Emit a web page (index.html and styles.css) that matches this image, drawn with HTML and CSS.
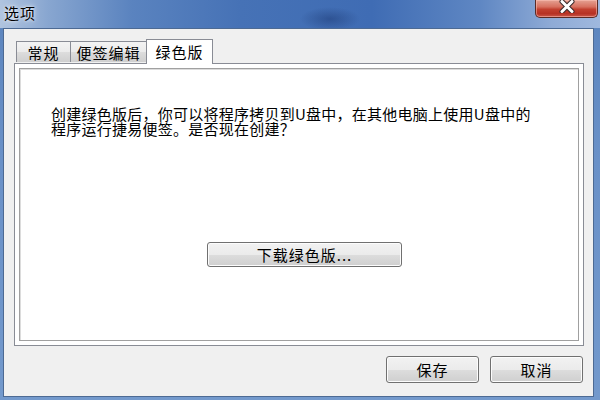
FILE: index.html
```html
<!DOCTYPE html>
<html lang="zh-CN">
<head>
<meta charset="utf-8">
<title>选项</title>
<link rel="stylesheet" href="styles.css">
</head>
<body>
<div class="window">
  <div class="titlebar">
    <span class="title">选项</span>
    <div class="close">
      <svg width="20" height="13" viewBox="0 0 20 13">
        <path d="M5 1.5 L15 11.5 M15 1.5 L5 11.5" stroke="#3a2a2a" stroke-width="5" stroke-linecap="round"/>
        <path d="M5 1.5 L15 11.5 M15 1.5 L5 11.5" stroke="#ffffff" stroke-width="3" stroke-linecap="round"/>
      </svg>
    </div>
  </div>
  <div class="client">
    <div class="tabs">
      <div class="tab t1">常规</div>
      <div class="tab t2">便签编辑</div>
      <div class="tab active">绿色版</div>
    </div>
    <div class="panel">
      <div class="inner">
        <p class="msg">创建绿色版后，你可以将程序拷贝到U盘中，在其他电脑上使用U盘中的<br>程序运行捷易便签。是否现在创建？</p>
        <div class="center-row">
          <button class="btn wide">下载绿色版...</button>
        </div>
      </div>
    </div>
    <div class="actions">
      <button class="btn">保存</button>
      <button class="btn">取消</button>
    </div>
  </div>
</div>
</body>
</html>
```
FILE: styles.css
```css
* { box-sizing: border-box; }
html, body { margin: 0; padding: 0; }
body {
  width: 600px;
  height: 400px;
  overflow: hidden;
  font-family: "Noto Sans CJK SC", "Liberation Sans", sans-serif;
  font-size: 15px;
  color: #000;
}
.window {
  width: 600px;
  height: 400px;
  display: flex;
  flex-direction: column;
  background: linear-gradient(to bottom, #5b84bd 0%, #6a91c8 40%, #7399cc 100%);
}
.titlebar {
  height: 28px;
  flex: none;
  display: flex;
  align-items: flex-start;
  background:
    radial-gradient(ellipse 30px 12px at 330px 19px, rgba(30,60,120,0.55), rgba(30,60,120,0) 100%),
    linear-gradient(to right, #b0c4df 0%, #88a6d0 8%, #5a83bf 22%, #4672b6 40%, #3f6cb4 62%, #5f87c3 80%, #8fabd6 92%, #9fb8de 100%);
}
.title {
  margin: 3px 0 0 4px;
  font-size: 15px;
  line-height: 20px;
  letter-spacing: 1px;
  text-shadow: 0 0 6px rgba(255,255,255,0.8), 0 0 3px rgba(255,255,255,0.8);
}
.close {
  margin-left: auto;
  margin-right: 2px;
  width: 63px;
  height: 18px;
  border: 1px solid #5a2b26;
  border-top: none;
  border-radius: 0 0 5px 5px;
  background: linear-gradient(to bottom, #e5a293 0%, #d7705f 40%, #c2402f 55%, #b73224 80%, #c9584a 100%);
  box-shadow: inset 0 0 0 1px rgba(255,200,190,0.5);
  display: flex;
  align-items: center;
  justify-content: center;
  padding-bottom: 4px;
}
.client {
  flex: 1;
  margin: 0 6px 3px 3px;
  border: 1px solid #4d6a93;
  background: #f0f0f0;
  display: flex;
  flex-direction: column;
  padding: 10px 9px 0 10px;
}
.tabs {
  height: 24px;
  flex: none;
  display: flex;
  align-items: flex-end;
  padding-left: 2px;
  position: relative;
  z-index: 1;
}
.tab {
  height: 21px;
  margin-bottom: 1px;
  padding: 1px 0 0;
  border: 1px solid #898c95;
  border-bottom: none;
  margin-right: -1px;
  background: linear-gradient(to bottom, #f3f3f3 0%, #ebebeb 50%, #dddddd 51%, #cfcfcf 100%);
  font-size: 15px;
  line-height: 19px;
  letter-spacing: 1px;
  white-space: nowrap;
  text-align: center;
}
.tab.t1 { width: 55px; }
.tab.t2 { width: 77px; }
.tab.active {
  height: 25px;
  margin-bottom: -1px;
  width: 67px;
  background: #ffffff;
  padding: 2px 0 0;
}
.panel {
  height: 283px;
  flex: none;
  border: 1px solid #898c95;
  background: #ffffff;
  padding: 4px;
  display: flex;
}
.inner {
  flex: 1;
  border: 1px solid #a0a0a0;
  box-shadow: inset 1px 1px 0 #dcdcdc;
  display: flex;
  flex-direction: column;
  padding: 37px 0 0 31px;
}
.msg {
  margin: 0;
  font-size: 15px;
  line-height: 15px;
  letter-spacing: 0.25px;
}
.center-row {
  display: flex;
  padding-left: 156px;
  margin-top: 106px;
}
.btn {
  font-family: "Noto Sans CJK SC", "Liberation Sans", sans-serif;
  font-size: 15px;
  color: #000;
  height: 27px;
  width: 93px;
  border: 1px solid #707070;
  border-radius: 3px;
  background: linear-gradient(to bottom, #f2f2f2 0%, #ebebeb 50%, #dddddd 51%, #cfcfcf 100%);
  box-shadow: inset 0 0 0 1px #fcfcfc;
  padding: 0;
  line-height: 22px;
  letter-spacing: 1px;
}
.btn.wide {
  width: 195px;
  height: 25px;
  line-height: 20px;
}
.actions {
  display: flex;
  justify-content: flex-end;
  gap: 11px;
  margin-top: 10px;
  padding-right: 1px;
}
```
